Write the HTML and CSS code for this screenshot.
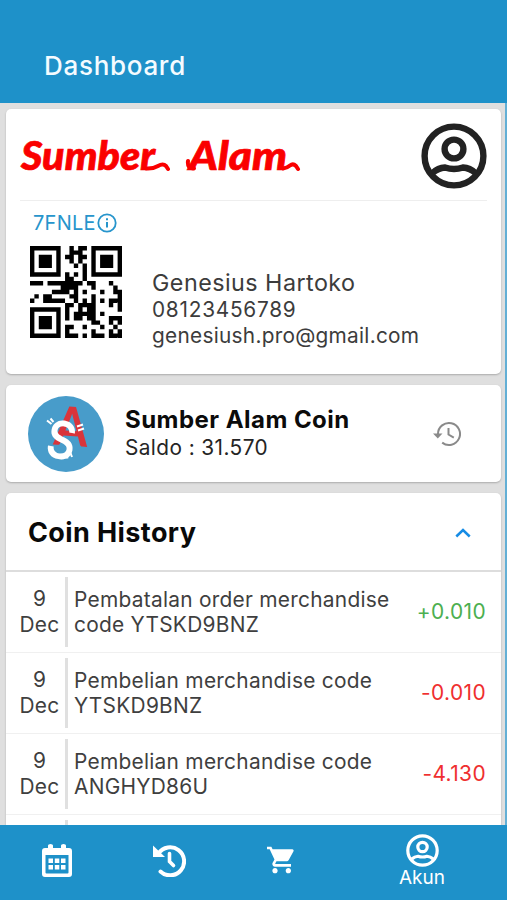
FILE: index.html
```html
<!DOCTYPE html>
<html lang="id">
<head>
<meta charset="utf-8">
<title>Dashboard</title>
<link rel="stylesheet" href="styles.css">
</head>
<body>
<svg class="defs" aria-hidden="true">
  <symbol id="person" viewBox="0 0 66 66">
    <g fill="none" stroke="currentColor" stroke-width="6.4">
      <circle cx="33" cy="33" r="29.4"/>
      <circle cx="33" cy="26" r="9.4"/>
      <path d="M11.500 50Q17 45 24 44.500Q33 47.500 42 44.500Q49 45 54.500 50"/>
    </g>
  </symbol>
</svg>
<div class="app">
  <header class="topbar"><h1>Dashboard</h1></header>
  <main class="content">
    <section class="card profile">
      <div class="brand-row">
        <svg class="brand" viewBox="0 0 284 46">
          <text class="brand-text" x="2" y="34" textLength="134" lengthAdjust="spacingAndGlyphs">Sumber</text>
          <text class="brand-text" x="170" y="34" textLength="98" lengthAdjust="spacingAndGlyphs">Alam</text>
          <path class="swash" d="M127 32.500Q134 33 139 30T147 30L149 33M264 32.500Q268 32 271 29.500T277 30L279 33M169 25Q168 33 175 32.500"/>
        </svg>
        <svg class="avatar"><use href="#person"/></svg>
      </div>
      <div class="member">
        <div class="code-col">
          <div class="code">7FNLE<svg class="info" viewBox="0 0 20 20"><circle cx="10" cy="10" r="8.7" fill="none" stroke="currentColor" stroke-width="1.8"/><path d="M10 9v5.5M10 5.3v2" stroke="currentColor" stroke-width="2"/></svg></div>
          <svg class="qr" id="qr" viewBox="0 0 21 21"></svg>
        </div>
        <div class="details">
          <div class="name">Genesius Hartoko</div>
          <div class="phone">08123456789</div>
          <div class="email">genesiush.pro@gmail.com</div>
        </div>
      </div>
    </section>
    <section class="card coin">
      <svg class="coin-logo" viewBox="0 0 76 76">
        <circle cx="38" cy="38" r="38" fill="#489cca"/>
        <text class="coin-a" transform="translate(25 48.500) rotate(4)" textLength="34" lengthAdjust="spacingAndGlyphs">A</text>
        <text class="coin-s" transform="translate(16 60) rotate(10)" textLength="29" lengthAdjust="spacingAndGlyphs">S</text>
        <path d="M19 24.500l4.500 3.500M22.500 22.500l3 3.500M49 30.500l6-2M50 34.500l6-2M38.500 58.500l1 4M42.500 57l1.500 4" stroke="#fff" stroke-width="2"/>
      </svg>
      <div class="coin-info">
        <div class="coin-title">Sumber Alam Coin</div>
        <div class="saldo">Saldo : 31.570</div>
      </div>
      <svg class="history" viewBox="0 0 28 26">
        <path d="M5 13a11 11 0 1 1 4.2 8.6" fill="none" stroke="currentColor" stroke-width="2"/>
        <path d="M0 12.5h9.5l-4.7 5z" fill="currentColor"/>
        <path d="M15.5 7v6.5l5.3 3.2" fill="none" stroke="currentColor" stroke-width="2"/>
      </svg>
    </section>
    <section class="card ledger">
      <div class="ledger-head">
        <h2>Coin History</h2>
        <svg class="chevron" viewBox="0 0 16 10"><path d="M1.3 8.5L8 2l6.7 6.5" fill="none" stroke="currentColor" stroke-width="2.5"/></svg>
      </div>
      <div class="entry"><div class="date">9<br>Dec</div><div class="desc">Pembatalan order merchandise code YTSKD9BNZ</div><div class="amount plus">+0.010</div></div>
      <div class="entry"><div class="date">9<br>Dec</div><div class="desc">Pembelian merchandise code YTSKD9BNZ</div><div class="amount">-0.010</div></div>
      <div class="entry"><div class="date">9<br>Dec</div><div class="desc">Pembelian merchandise code ANGHYD86U</div><div class="amount">-4.130</div></div>
      <div class="entry"><div class="date"></div><div class="desc"></div></div>
    </section>
  </main>
  <nav class="tabs">
    <div class="tab"><svg class="i-cal" viewBox="0 0 30 34">
      <path fill="#fff" fill-rule="evenodd" d="M3 4h3V1.500Q6 0 8.500 0T11 1.500V4h8V1.500Q19 0 21.500 0T24 1.500V4h3q3 0 3 3v23q0 3-3 3H3q-3 0-3-3V7q0-3 3-3zM3.500 11v17.500q0 1 1 1h21q1 0 1-1V11z"/>
      <path fill="#fff" d="M6.500 14.500h4.500v4.500H6.500zM12.800 14.500h4.500v4.500h-4.500zM19 14.500h4.500v4.500H19zM6.500 21h4.500v4.500H6.500zM12.800 21h4.500v4.500h-4.500zM19 21h4.500v4.500H19z"/></svg></div>
    <div class="tab"><svg class="i-hist" viewBox="0 0 33 33">
      <path d="M5.500 9.500A14 14 0 1 1 7.500 27.500" fill="none" stroke="#fff" stroke-width="4" stroke-linecap="round"/>
      <path d="M0 1.500L12 13H0z" fill="#fff"/>
      <path d="M16.500 9.500v8l4 4" fill="none" stroke="#fff" stroke-width="3.600" stroke-linecap="round"/></svg></div>
    <div class="tab"><svg class="i-cart" viewBox="1 2 21 20"><path fill="#fff" d="M7 18c-1.100 0-1.990.9-1.990 2S5.900 22 7 22s2-.9 2-2-.9-2-2-2zM1 2v2h2l3.600 7.590-1.350 2.450c-.16.280-.25.610-.25.960 0 1.100.9 2 2 2h12v-2H7.420c-.14 0-.25-.11-.25-.25l.03-.12.9-1.630h7.450c.75 0 1.410-.41 1.750-1.030l3.580-6.490A1 1 0 0 0 20 4H5.210l-.94-2H1zm16 16c-1.100 0-1.990.9-1.990 2s.89 2 1.990 2 2-.9 2-2-.9-2-2-2z"/></svg></div>
    <div class="tab active"><svg class="i-user"><use href="#person"/></svg><span>Akun</span></div>
  </nav>
</div>
<script src="qr.js"></script>
</body>
</html>
```

FILE: qr.js
```js
const rows = [
  "#######..#.##.#######",
  "#.....#..###..#.....#",
  "#.###.#.##.##.#.###.#",
  "#.###.#..#.#..#.###.#",
  "#.###.#...#.#.#.###.#",
  "#.....#.....#.#.....#",
  "#######.#.#.#.#######",
  "........##..#........",
  "###.########.##...#..",
  ".......####...#....#.",
  ".....####.#.#...#..##",
  ".#.##....##...#.....#",
  "#..#####..#.#.#.#.###",
  "........##.####...#.#",
  "#######.#..#.##.....#",
  "#.....#.#.#####.#....",
  "#.###.#.#.##.##...###",
  "#.###.#.......##..#.#",
  "#.###.#.##..#...#..#.",
  "#.....#.#.....#...#.#",
  "#######.###.#.###.###"
];
const path = document.createElementNS("http://www.w3.org/2000/svg", "path");
path.setAttribute("d", rows.map((row, y) =>
  [...row].map((c, x) => c === "#" ? `M${x} ${y}h1v1h-1z` : "").join("")
).join(""));
document.getElementById("qr").append(path);
```

FILE: styles.css
```css
* { box-sizing: border-box; }
body { margin: 0; font-family: Inter, "Liberation Sans", sans-serif; color: #333; background: #dfdfdf; }
svg { display: block; flex: none; }
.defs { display: none; }
.app { height: 900px; display: flex; flex-direction: column; overflow: hidden; }
.topbar { height: 103px; flex: none; background: #1e91c9; padding: 49px 44px 0; }
h1 { margin: 0; font-size: 26px; line-height: 34px; font-weight: 500; letter-spacing: .7px; color: #f4fbff; }
.content { flex: 1; min-height: 0; overflow: hidden; padding: 6px 4px 0 6px; border-right: 2px solid #63afd5; display: flex; flex-direction: column; gap: 11px; }
.card { background: #fff; border-radius: 5px; box-shadow: 0 1px 2px #aaa; flex: none; }
.profile { height: 265px; padding: 14px 14px 0; }
.brand-row { height: 78px; display: flex; justify-content: space-between; border-bottom: 1px solid #eee; }
.brand { width: 284px; height: 46px; margin: 13px 0 0 -1px; overflow: visible; }
.brand-text { font: italic 900 39px Lato, sans-serif; fill: #fa0000; stroke: #fa0000; stroke-width: .7px; }
.swash { fill: none; stroke: #fa0000; stroke-width: 4px; stroke-linecap: round; }
.avatar { width: 66px; height: 66px; color: #222; }
.member { display: flex; }
.code-col { width: 132px; padding: 11px 0 0 10px; }
.code { display: flex; align-items: center; height: 22px; padding-left: 4px; margin-left: -1px; color: #2795cc; font-size: 20px; letter-spacing: .25px; }
.info { width: 20px; height: 20px; margin-left: 1px; }
.qr { width: 92px; height: 92px; margin: 12px 0 0; }
.details { padding-top: 68px; color: #3c3c3c; }
.name { font-size: 23.3px; line-height: 28px; letter-spacing: .47px; }
.phone, .email { font-size: 20.8px; line-height: 25.5px; letter-spacing: .28px; }
.phone { letter-spacing: .75px; }
.coin { height: 97px; display: flex; align-items: center; padding: 0 40px 0 22px; }
.coin-logo { width: 76px; height: 76px; overflow: visible; }
.coin-a { font: 700 54px/1 Lato, sans-serif; fill: #d9343b; }
.coin-s { font: 600 52px/1 Inter, sans-serif; fill: #fff; }
.coin-info { flex: 1; padding: 0 0 1px 21px; white-space: nowrap; }
.coin-title { font-size: 24px; font-weight: 700; line-height: 29px; letter-spacing: .46px; color: #0b0b0b; }
.saldo { font-size: 20.8px; line-height: 27px; letter-spacing: .42px; color: #252525; }
.history { width: 28px; height: 26px; color: #8a8a8a; }
.ledger-head { height: 79px; padding: 2px 30px 0 22px; display: flex; align-items: center; justify-content: space-between; border-bottom: 2px solid #ddd; }
h2 { margin: 0; font-size: 27px; font-weight: 700; letter-spacing: .4px; color: #090909; }
.chevron { width: 16px; height: 10px; color: #168ce5; }
.entry { height: 81px; display: flex; align-items: center; padding: 5px 15px 5px 8px; border-bottom: 1px solid #f0f0f0; font-size: 20.9px; line-height: 25.5px; color: #3f3f3f; }
.date { box-sizing: content-box; width: 51px; height: 61px; padding: 9px 0 0; text-align: center; border-right: 3px solid #e0e0e0; letter-spacing: .2px; }
.desc { flex: 1; padding-left: 6px; letter-spacing: .26px; }
.amount { color: #ef2f2f; letter-spacing: .4px; }
.plus { color: #4caf50; }
.tabs { height: 75px; flex: none; background: #1e91c9; display: grid; grid-template-columns: 113px 112px 112px 170px; }
.tab { display: flex; flex-direction: column; align-items: center; padding-top: 19px; }
.i-cal { width: 30px; height: 34px; }
.i-hist { width: 33px; height: 33px; }
.i-cart { width: 28px; height: 28px; margin-top: 2px; }
.active { padding-top: 9px; color: #fff; font-size: 19px; line-height: 22px; }
.i-user { width: 33px; height: 33px; }
```
